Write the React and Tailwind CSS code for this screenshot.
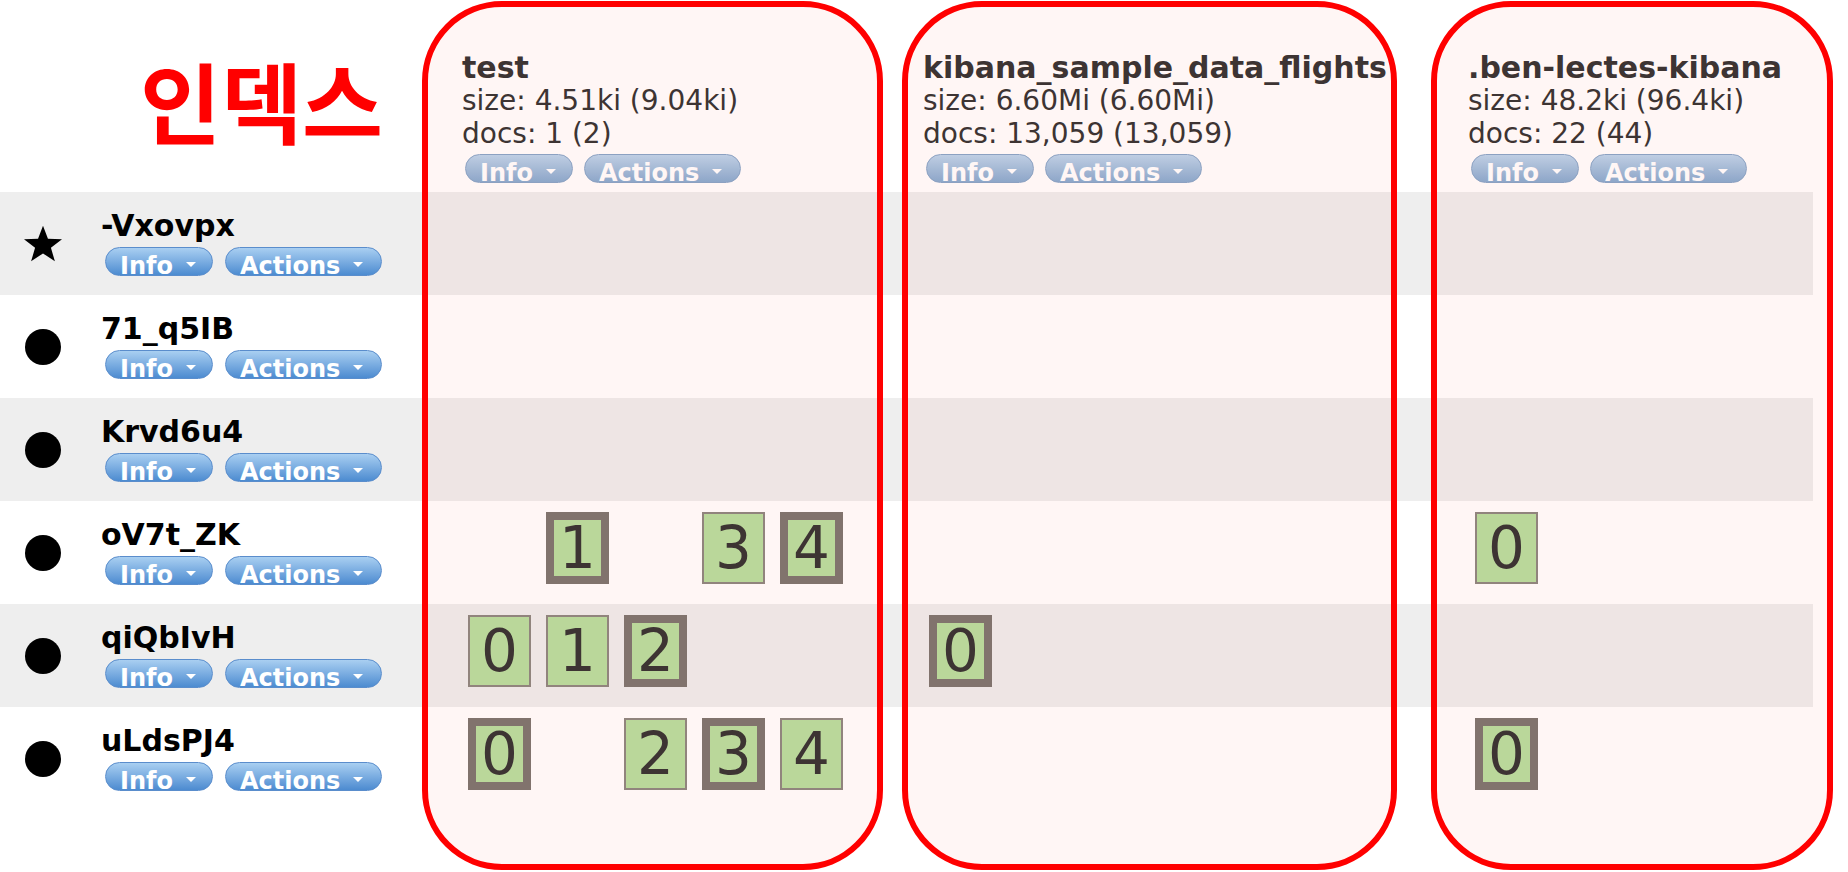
import React from 'react';

const indices = [
  { name: 'test', size: '4.51ki (9.04ki)', docs: '1 (2)', width: 'w-[461px]', pad: 'pl-[6px]' },
  { name: 'kibana_sample_data_flights', size: '6.60Mi (6.60Mi)', docs: '13,059 (13,059)', width: 'w-[545px]', pad: 'pl-[6px]' },
  { name: '.ben-lectes-kibana', size: '48.2ki (96.4ki)', docs: '22 (44)', width: 'w-[345px]', pad: 'pl-[7px]' },
];

// p = primary (thick border), r = replica
const nodes = [
  { name: '-Vxovpx', master: true, shards: [[], [], []] },
  { name: '71_q5IB', shards: [[], [], []] },
  { name: 'Krvd6u4', shards: [[], [], []] },
  { name: 'oV7t_ZK', shards: [[null, '1p', null, '3r', '4p'], [], ['0r']] },
  { name: 'qiQbIvH', shards: [['0r', '1r', '2p'], ['0p'], []] },
  { name: 'uLdsPJ4', shards: [['0p', null, '2r', '3p', '4r'], [], ['0p']] },
];

function DropButton({ label, width, faded }) {
  const colors = faded
    ? 'border-[#86a6c9] bg-linear-to-b from-[#bcd5ec] to-[#88abd0]'
    : 'border-[#5a8dcc] bg-linear-to-b from-[#a9cff1] to-[#4c8bd0]';
  return (
    <div className={`flex items-start ${width} h-[29px] rounded-full border ${colors} overflow-hidden pl-[14px] text-white font-bold text-[24px]`}>
      <span className="leading-[24px] mt-[6px]">{label}</span>
      <span className="mt-[14px] ml-[13px] w-0 h-0 border-l-[5px] border-r-[5px] border-t-[5px] border-l-transparent border-r-transparent border-t-white" />
    </div>
  );
}

function Shard({ code }) {
  if (!code) return <div className="w-[63px] h-[72px]" />;
  const primary = code[1] === 'p';
  return (
    <div
      className={`w-[63px] h-[72px] flex items-center justify-center bg-[#b7dfa0] text-[#333] text-[58px] leading-none ${
        primary ? 'border-[8px] border-[#7b7570]' : 'border-2 border-[#8c8781]'
      }`}
    >
      {code[0]}
    </div>
  );
}

export default function App() {
  return (
    <div className="relative w-[1848px] h-[872px] overflow-hidden bg-white font-['DejaVu_Sans',sans-serif]">
      {/* header */}
      <div className="flex h-[192px]">
        <div className="w-[462px] pl-[140px] pt-[55px]">
          <span className="font-['Noto_Sans_CJK_KR',sans-serif] font-bold text-[88px] leading-[88px] text-[#ff0000]">인덱스</span>
        </div>
        {indices.map((ix) => (
          <div key={ix.name} className={`${ix.width} pt-[51px] text-[#333]`}>
            <div className="font-bold text-[30px] leading-[33px] whitespace-nowrap">{ix.name}</div>
            <div className="text-[28px] leading-[33px] whitespace-nowrap">size: {ix.size}</div>
            <div className="text-[28px] leading-[33px] whitespace-nowrap">docs: {ix.docs}</div>
            <div className="flex gap-[11px] mt-[4px] ml-[3px]">
              <DropButton label="Info" width="w-[108px]" faded />
              <DropButton label="Actions" width="w-[157px]" faded />
            </div>
          </div>
        ))}
      </div>

      {/* node rows */}
      {nodes.map((n, i) => (
        <div key={n.name} className={`flex w-[1813px] h-[103px] ${i % 2 === 0 ? 'bg-[#eeeeee]' : 'bg-white'}`}>
          <div className="flex w-[462px]">
            <div className="w-[86px] flex items-center justify-center">
              {n.master ? (
                <svg width="40" height="38" viewBox="0 0 24 23">
                  <polygon points="12,0.5 15,8.3 23.5,8.6 16.8,13.8 19.2,22 12,17.2 4.8,22 7.2,13.8 0.5,8.6 9,8.3" fill="#000" />
                </svg>
              ) : (
                <div className="w-[36px] h-[36px] rounded-full bg-black" />
              )}
            </div>
            <div className="pl-[15px] pt-[16px]">
              <div className="font-bold text-[30px] leading-[36px] text-black">{n.name}</div>
              <div className="flex gap-[12px] mt-[3px] ml-[4px]">
                <DropButton label="Info" width="w-[108px]" />
                <DropButton label="Actions" width="w-[157px]" />
              </div>
            </div>
          </div>
          {indices.map((ix, c) => (
            <div key={ix.name} className={`${ix.width} ${ix.pad} pt-[11px] flex gap-[15px]`}>
              {n.shards[c].map((s, k) => (
                <Shard key={k} code={s} />
              ))}
            </div>
          ))}
        </div>
      ))}

      {/* red annotation boxes */}
      <div className="pointer-events-none absolute top-[1px] left-[422px] w-[461px] h-[869px] rounded-[80px] border-[6px] border-[#ff0000] bg-[rgba(255,80,50,0.05)]" />
      <div className="pointer-events-none absolute top-[1px] left-[902px] w-[495px] h-[869px] rounded-[80px] border-[6px] border-[#ff0000] bg-[rgba(255,80,50,0.05)]" />
      <div className="pointer-events-none absolute top-[1px] left-[1431px] w-[402px] h-[869px] rounded-[80px] border-[6px] border-[#ff0000] bg-[rgba(255,80,50,0.05)]" />
    </div>
  );
}
